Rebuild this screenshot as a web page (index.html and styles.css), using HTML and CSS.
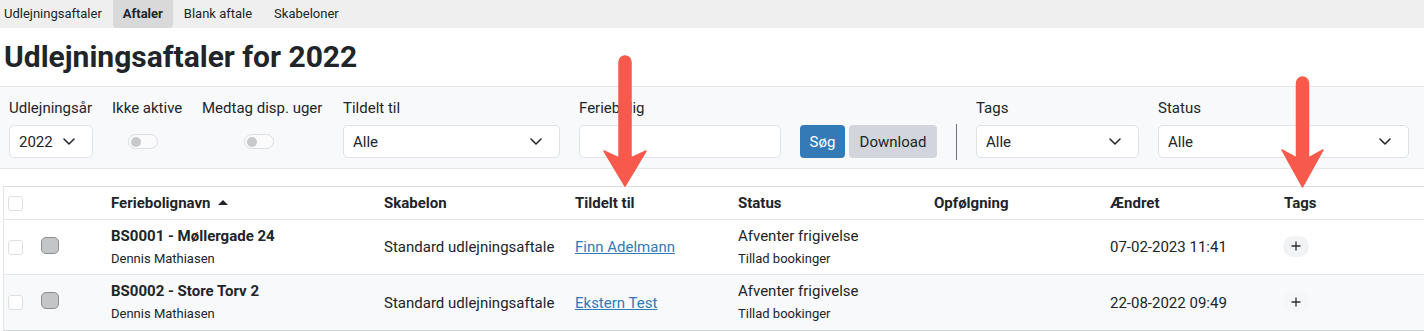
FILE: index.html
```html
<!DOCTYPE html>
<html lang="da">
<head>
<meta charset="utf-8">
<title>Udlejningsaftaler for 2022</title>
<link rel="stylesheet" href="styles.css">
</head>
<body>
<nav class="tabs">
  <div class="tab first">Udlejningsaftaler</div>
  <div class="tab active">Aftaler</div>
  <div class="tab">Blank aftale</div>
  <div class="tab">Skabeloner</div>
</nav>

<h1 class="title">Udlejningsaftaler for 2022</h1>

<section class="filters">
  <div class="field w-year">
    <div class="label">Udlejningsår</div>
    <div class="select"><span>2022</span><svg class="chev" width="12" height="7" viewBox="0 0 12 7"><path d="M1 1 L6 6 L11 1" fill="none" stroke="#212529" stroke-width="1.5" stroke-linecap="round" stroke-linejoin="round"/></svg></div>
  </div>
  <div class="field w-inactive">
    <div class="label">Ikke aktive</div>
    <div class="toggle-row"><span class="toggle t1"><span class="knob"></span></span></div>
  </div>
  <div class="field w-disp">
    <div class="label">Medtag disp. uger</div>
    <div class="toggle-row"><span class="toggle t2"><span class="knob"></span></span></div>
  </div>
  <div class="field w-assigned">
    <div class="label">Tildelt til</div>
    <div class="select"><span>Alle</span><svg class="chev" width="12" height="7" viewBox="0 0 12 7"><path d="M1 1 L6 6 L11 1" fill="none" stroke="#212529" stroke-width="1.5" stroke-linecap="round" stroke-linejoin="round"/></svg></div>
  </div>
  <div class="field w-house">
    <div class="label">Feriebolig</div>
    <div class="input"></div>
  </div>
  <div class="buttons">
    <button class="btn btn-primary">Søg</button>
    <button class="btn btn-secondary">Download</button>
  </div>
  <div class="separator"></div>
  <div class="field w-tags">
    <div class="label">Tags</div>
    <div class="select"><span>Alle</span><svg class="chev" width="12" height="7" viewBox="0 0 12 7"><path d="M1 1 L6 6 L11 1" fill="none" stroke="#212529" stroke-width="1.5" stroke-linecap="round" stroke-linejoin="round"/></svg></div>
  </div>
  <div class="field w-status">
    <div class="label">Status</div>
    <div class="select"><span>Alle</span><svg class="chev" width="12" height="7" viewBox="0 0 12 7"><path d="M1 1 L6 6 L11 1" fill="none" stroke="#212529" stroke-width="1.5" stroke-linecap="round" stroke-linejoin="round"/></svg></div>
  </div>
</section>

<table class="grid">
  <colgroup>
    <col class="c0"><col class="c1"><col class="c2"><col class="c3"><col class="c4"><col class="c5"><col class="c6"><col class="c7"><col class="c8">
  </colgroup>
  <thead>
    <tr>
      <th class="cb-cell"><span class="checkbox"></span></th>
      <th></th>
      <th>Feriebolignavn <span class="caret"></span></th>
      <th>Skabelon</th>
      <th>Tildelt til</th>
      <th>Status</th>
      <th>Opfølgning</th>
      <th>Ændret</th>
      <th>Tags</th>
    </tr>
  </thead>
  <tbody>
    <tr class="row">
      <td class="cb-cell"><span class="checkbox"></span></td>
      <td><span class="dot"></span></td>
      <td class="two-line"><div class="main">BS0001 - Møllergade 24</div><div class="sub">Dennis Mathiasen</div></td>
      <td>Standard udlejningsaftale</td>
      <td><a class="link" href="#">Finn Adelmann</a></td>
      <td class="two-line"><div class="main normal">Afventer frigivelse</div><div class="sub">Tillad bookinger</div></td>
      <td></td>
      <td>07-02-2023 11:41</td>
      <td><span class="tag-add"><svg width="10" height="10" viewBox="0 0 10 10"><path d="M5 0.5 V9.5 M0.5 5 H9.5" stroke="#2b2f33" stroke-width="1.3"/></svg></span></td>
    </tr>
    <tr class="row striped">
      <td class="cb-cell"><span class="checkbox"></span></td>
      <td><span class="dot"></span></td>
      <td class="two-line"><div class="main">BS0002 - Store Torv 2</div><div class="sub">Dennis Mathiasen</div></td>
      <td>Standard udlejningsaftale</td>
      <td><a class="link" href="#">Ekstern Test</a></td>
      <td class="two-line"><div class="main normal">Afventer frigivelse</div><div class="sub">Tillad bookinger</div></td>
      <td></td>
      <td>22-08-2022 09:49</td>
      <td><span class="tag-add"><svg width="10" height="10" viewBox="0 0 10 10"><path d="M5 0.5 V9.5 M0.5 5 H9.5" stroke="#2b2f33" stroke-width="1.3"/></svg></span></td>
    </tr>
  </tbody>
</table>

<svg class="arrow arrow-1" width="50" height="136" viewBox="0 0 50 136">
  <path d="M19,10 A6,6 0 0 1 31,10 L31,106 L46,99 L25,134 L4,99 L19,106 Z" fill="#f75a4c" stroke="#f75a4c" stroke-width="1.5" stroke-linejoin="round"/>
</svg>
<svg class="arrow arrow-2" width="50" height="116" viewBox="0 0 50 116">
  <path d="M18.5,10 A6,6 0 0 1 30.5,10 L30.5,85 L45,77 L24.5,114 L4,77 L18.5,85 Z" fill="#f75a4c" stroke="#f75a4c" stroke-width="1.5" stroke-linejoin="round"/>
</svg>
</body>
</html>
```

FILE: styles.css
```css
* { box-sizing: border-box; }
html, body { margin: 0; padding: 0; }
body {
  font-family: Roboto, "Liberation Sans", Arial, sans-serif;
  color: #212529;
  background: #fff;
  width: 1424px;
  height: 331px;
  overflow: hidden;
  position: relative;
}

/* top tabs */
.tabs {
  display: flex;
  height: 28px;
  background: #efefef;
  font-size: 13px;
}
.tab {
  padding: 0 11px;
  line-height: 28px;
  border-radius: 0 0 4px 4px;
  white-space: nowrap;
}
.tab.first { padding-left: 4px; }
.tab.active {
  background: #d9d9d9;
  font-weight: 700;
  padding: 0 10px;
}

/* title */
.title {
  margin: 11px 0 11px 4px;
  font-size: 30px;
  line-height: 36px;
  font-weight: 700;
}

/* filter panel */
.filters {
  display: flex;
  align-items: flex-end;
  gap: 19px;
  padding: 11px 0 10px 9px;
  background: #f8f9fa;
  border-top: 1px solid #e4e6e9;
  border-bottom: 1px solid #e4e6e9;
}
.field {
  display: flex;
  flex-direction: column;
  gap: 7px;
}
.label {
  font-size: 15px;
  line-height: 20px;
  white-space: nowrap;
}
.w-year { width: 84px; }
.w-inactive { width: 71px; }
.w-disp { width: 122px; }
.w-assigned { width: 217px; }
.w-house { width: 202px; }
.w-tags { width: 163px; }
.w-status { width: 251px; }

.select, .input {
  height: 33px;
  background: #fff;
  border: 1px solid #dfe2e6;
  border-radius: 5px;
}
.select {
  display: flex;
  align-items: center;
  justify-content: space-between;
  padding: 0 17px 0 9px;
  font-size: 15px;
}
.chev { display: block; flex: none; }

.toggle-row {
  height: 33px;
  display: flex;
  align-items: center;
}
.toggle {
  width: 30px;
  height: 15px;
  border: 1px solid #dcdfe3;
  border-radius: 8px;
  background: #fbfbfc;
  display: flex;
  align-items: center;
  padding-left: 2px;
}
.t1 { margin-left: 16px; }
.t2 { margin-left: 42px; }
.knob {
  width: 10px;
  height: 10px;
  border-radius: 50%;
  background: #c7c9cc;
}

.buttons {
  display: flex;
  gap: 4px;
  width: 137px;
}
.btn {
  height: 33px;
  border: none;
  border-radius: 4px;
  font-family: inherit;
  font-size: 15px;
  padding: 0;
  cursor: pointer;
}
.btn-primary { width: 45px; background: #337ab7; color: #fff; }
.btn-secondary { width: 88px; background: #d2d6dc; color: #212529; }

.separator {
  width: 1px;
  height: 36px;
  background: #6c757d;
  margin-bottom: -2px;
}

/* table */
.grid {
  margin: 17px 0 0 3px;
  width: 1421px;
  table-layout: fixed;
  border-collapse: separate;
  border-spacing: 0;
  border-left: 1px solid #e3e5e8;
  border-top: 1px solid #dcdfe2;
}
.c0 { width: 29px; }
.c1 { width: 70px; }
.c2 { width: 273px; }
.c3 { width: 191px; }
.c4 { width: 163px; }
.c5 { width: 196px; }
.c6 { width: 176px; }
.c7 { width: 174px; }
.c8 { width: 148px; }

.grid th, .grid td {
  padding: 0 8px;
  vertical-align: middle;
  text-align: left;
  white-space: nowrap;
  border-bottom: 1px solid #e3e5e8;
}
.grid th {
  height: 33px;
  font-size: 15px;
  font-weight: 700;
}
.grid td {
  font-size: 15px;
  height: 55px;
}
.grid tbody tr:last-child td {
  height: 56px;
  border-bottom-color: #cfd2d6;
}
.grid .cb-cell { padding: 0 0 0 4px; }
.grid td.two-line {
  vertical-align: top;
  padding-top: 6px;
}
.striped td { background: #f8f9fb; }

.checkbox {
  display: block;
  width: 15px;
  height: 15px;
  border: 1px solid #dcdfe3;
  border-radius: 3px;
  background: #fff;
}
.dot {
  display: block;
  width: 18px;
  height: 17px;
  border: 1px solid #8c8e91;
  border-radius: 5px;
  background: #c4c5c7;
  margin-top: -4px;
}
.caret {
  display: inline-block;
  width: 0;
  height: 0;
  border-left: 5px solid transparent;
  border-right: 5px solid transparent;
  border-bottom: 5px solid #212529;
  margin-left: 4px;
  vertical-align: 3px;
}
.main {
  font-size: 15px;
  font-weight: 700;
  line-height: 20px;
}
.main.normal { font-weight: 400; }
.sub {
  font-size: 13px;
  line-height: 18px;
  margin-top: 4px;
}
.link {
  color: #337ab7;
  text-decoration: underline;
}
.tag-add {
  display: inline-flex;
  align-items: center;
  justify-content: center;
  width: 26px;
  height: 21px;
  border-radius: 10px;
  background: #f2f3f5;
  margin-left: -1px;
  margin-top: -2px;
}
.striped .tag-add { background: #f5f6f8; }
.tag-add svg { display: block; }

/* annotation arrows */
.arrow { position: absolute; display: block; }
.arrow-1 { left: 600px; top: 52px; }
.arrow-2 { left: 1278px; top: 73px; }
```
